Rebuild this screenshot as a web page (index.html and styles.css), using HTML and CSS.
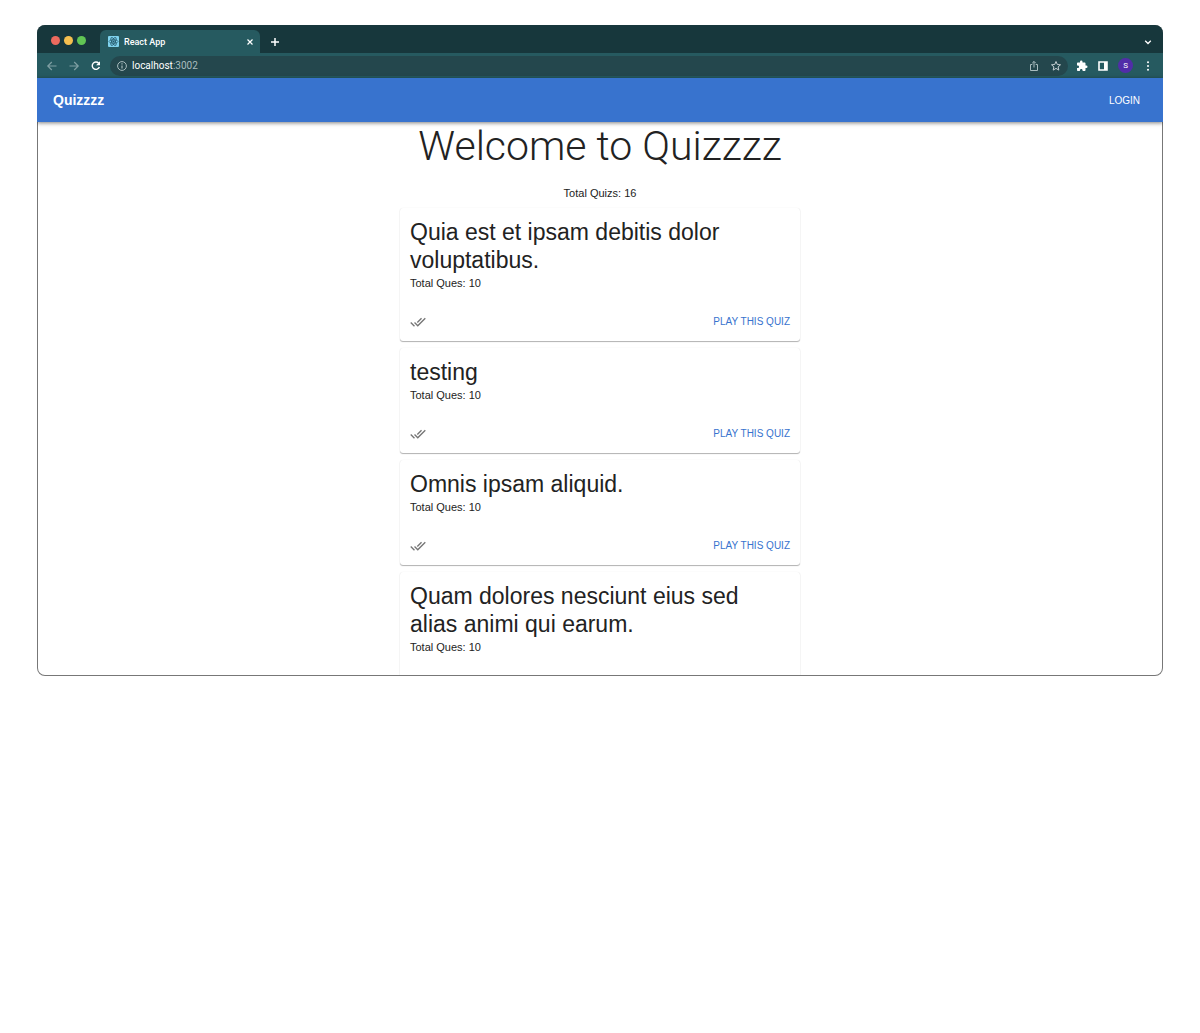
FILE: index.html
```html
<!DOCTYPE html>
<html lang="en">
<head>
<meta charset="utf-8">
<title>React App</title>
<link rel="stylesheet" href="styles.css">
</head>
<body>
<svg class="defs" aria-hidden="true">
  <symbol id="done-all" viewBox="0 0 24 24"><path d="M18 7l-1.410-1.410-6.340 6.340 1.410 1.410L18 7zm4.240-1.410L11.660 16.170 7.480 12l-1.410 1.410L11.660 19l12-12-1.420-1.410zM.41 13.410L6 19l1.410-1.410L1.830 12 .41 13.410z"/></symbol>
</svg>
<div class="window">
  <div class="tabbar">
    <div class="lights"><span class="light red"></span><span class="light yellow"></span><span class="light green"></span></div>
    <div class="tab">
      <svg class="favicon" viewBox="0 0 22 22"><rect width="22" height="22" rx="2" fill="#7fd3ee"/><g fill="none" stroke="#24596b" stroke-width="1.500"><ellipse cx="11" cy="11" rx="9" ry="3.500"/><ellipse cx="11" cy="11" rx="9" ry="3.500" transform="rotate(60 11 11)"/><ellipse cx="11" cy="11" rx="9" ry="3.500" transform="rotate(120 11 11)"/></g><circle cx="11" cy="11" r="2" fill="#24596b"/></svg>
      <span class="tab-title">React App</span>
      <button class="icon-button" aria-label="Close tab"><svg class="close" viewBox="0 0 8 8"><path d="M1.500 1.500l5 5m0-5l-5 5" fill="none" stroke="#fff" stroke-width="1.200"/></svg></button>
    </div>
    <button class="icon-button new-tab" aria-label="New tab"><svg viewBox="0 0 10 10"><path d="M5 1v8M1 5h8" fill="none" stroke="#fff" stroke-width="1.500"/></svg></button>
    <button class="icon-button tab-menu" aria-label="Search tabs"><svg viewBox="0 0 10 10"><path d="M2.200 3.800L5 6.500l2.800-2.700" fill="none" stroke="#fff" stroke-width="1.300"/></svg></button>
  </div>
  <div class="toolbar">
    <div class="nav">
      <button class="icon-button" aria-label="Back"><svg viewBox="0 0 12 12"><path d="M10.500 6H2M5.800 2L1.800 6l4 4" fill="none" stroke="#7f9fa3" stroke-width="1.200"/></svg></button>
      <button class="icon-button" aria-label="Forward"><svg viewBox="0 0 12 12"><path d="M1.500 6H10M6.200 2l4 4-4 4" fill="none" stroke="#7f9fa3" stroke-width="1.200"/></svg></button>
      <button class="icon-button" aria-label="Reload"><svg viewBox="0 0 12 12"><path d="M8.700 3.200A3.700 3.700 0 1 0 9.400 7" fill="none" stroke="#fff" stroke-width="1.400"/><path d="M10 1.300v3.900H6.100z" fill="#fff"/></svg></button>
    </div>
    <div class="address">
      <svg viewBox="0 0 12 12"><circle cx="6" cy="6" r="4.400" fill="none" stroke="#a9bcbe"/><path d="M6 5.400v3M6 3.300v1.200" stroke="#a9bcbe" stroke-width="1.200"/></svg>
      <span class="url">localhost<span class="port">:3002</span></span>
      <button class="icon-button" aria-label="Share"><svg viewBox="0 0 12 12"><path d="M4.300 4.500H2.500v6h7v-6H7.700M6 7.500V1.500M4.200 3.200L6 1.400l1.800 1.800" fill="none" stroke="#a9bcbe"/></svg></button>
      <button class="icon-button" aria-label="Bookmark"><svg viewBox="0 0 12 12"><path d="M6 1.500l1.300 3 3.200.300-2.400 2.100.7 3.200L6 8.400l-2.800 1.700.7-3.200L1.500 4.800l3.200-.3z" fill="none" stroke="#c5d0d2"/></svg></button>
    </div>
    <div class="tools">
      <button class="icon-button" aria-label="Extensions"><svg viewBox="0 0 24 24"><path fill="#fff" d="M20.500 11H19V7c0-1.100-.9-2-2-2h-4V3.500a2.500 2.500 0 0 0-5 0V5H4c-1.100 0-2 .9-2 2v3.800h1.500c1.500 0 2.700 1.200 2.700 2.700s-1.200 2.700-2.700 2.700H2V20c0 1.100.9 2 2 2h3.800v-1.500c0-1.500 1.200-2.700 2.700-2.700s2.700 1.200 2.700 2.700V22H17c1.100 0 2-.9 2-2v-4h1.500a2.500 2.500 0 0 0 0-5z"/></svg></button>
      <button class="icon-button" aria-label="Side panel"><svg viewBox="0 0 12 12"><path d="M2 2h8v8H2z" fill="none" stroke="#fff" stroke-width="1.600"/><path d="M7 2h3v8H7z" fill="#fff"/></svg></button>
      <button class="profile" aria-label="Profile">S</button>
      <button class="icon-button" aria-label="Menu"><svg viewBox="0 0 12 12"><g fill="#fff"><circle cx="6" cy="2.300" r="1"/><circle cx="6" cy="6" r="1"/><circle cx="6" cy="9.700" r="1"/></g></svg></button>
    </div>
  </div>
  <header class="appbar">
    <a class="brand" href="#">Quizzzz</a>
    <a class="login" href="#">LOGIN</a>
  </header>
  <main class="page">
    <h1 class="title">Welcome to Quizzzz</h1>
    <p class="total">Total Quizs: 16</p>
    <div class="quizzes">
      <article class="card">
        <h2 class="name">Quia est et ipsam debitis dolor voluptatibus.</h2>
        <p class="count">Total Ques: 10</p>
        <div class="actions"><svg class="done"><use href="#done-all"/></svg><button class="play">PLAY THIS QUIZ</button></div>
      </article>
      <article class="card">
        <h2 class="name">testing</h2>
        <p class="count">Total Ques: 10</p>
        <div class="actions"><svg class="done"><use href="#done-all"/></svg><button class="play">PLAY THIS QUIZ</button></div>
      </article>
      <article class="card">
        <h2 class="name">Omnis ipsam aliquid.</h2>
        <p class="count">Total Ques: 10</p>
        <div class="actions"><svg class="done"><use href="#done-all"/></svg><button class="play">PLAY THIS QUIZ</button></div>
      </article>
      <article class="card">
        <h2 class="name">Quam dolores nesciunt eius sed alias animi qui earum.</h2>
        <p class="count">Total Ques: 10</p>
        <div class="actions"></div>
      </article>
    </div>
  </main>
</div>
</body>
</html>
```

FILE: styles.css
```css
* { box-sizing: border-box; }

body {
  margin: 0;
  padding: 25px 37px;
  background: #fff;
  color: #222;
  font-family: "Liberation Sans", Arial, sans-serif;
}

h1, h2, p { margin: 0; font-weight: 400; }
a { color: inherit; text-decoration: none; }
button { padding: 0; border: 0; background: none; font: inherit; }
svg { display: block; width: 12px; height: 12px; }
.defs { display: none; }
.icon-button { display: flex; }

.window {
  display: flex;
  flex-direction: column;
  aspect-ratio: 1126 / 651;
  min-height: 0;
  overflow: hidden;
  border-radius: 8px;
  background: #fff;
  box-shadow: inset 0 0 0 1px #777;
}

/* Browser frame */
.tabbar {
  display: flex;
  flex: none;
  align-items: center;
  height: 28px;
  padding: 0 10px 0 14px;
  background: #17373c;
}
.lights { display: flex; gap: 4px; padding-top: 2px; }
.light { width: 9px; height: 9px; border-radius: 50%; }
.red { background: #ed6a5e; }
.yellow { background: #f5bf4f; }
.green { background: #61c554; }
.tab {
  display: flex;
  align-items: center;
  align-self: flex-end;
  gap: 5px;
  width: 160px;
  height: 23px;
  margin-left: 14px;
  padding: 0 6px 0 8px;
  border-radius: 6px 6px 0 0;
  background: #265a60;
  color: #fff;
  font: 500 9px/12px Roboto, sans-serif;
}
.tab-title { flex: 1; }
.favicon { width: 11px; height: 11px; }
.close { width: 8px; height: 8px; }
.new-tab { margin: 5px 0 0 10px; }
.new-tab svg, .tab-menu svg { width: 10px; height: 10px; }
.tab-menu { margin: 5px 0 0 auto; }

.toolbar {
  display: flex;
  flex: none;
  align-items: center;
  gap: 8px;
  height: 25px;
  padding: 0 9px;
  background: #265a60;
}
.nav { display: flex; gap: 10px; }
.address {
  display: flex;
  flex: 1;
  align-items: center;
  gap: 10px;
  height: 20px;
  padding: 0 6px;
  border-radius: 10px;
  background: #24474d;
}
.url {
  flex: 1;
  margin-left: -6px;
  color: #fff;
  font: 10px/12px Roboto, sans-serif;
}
.port { color: #a9bcbe; }
.tools { display: flex; align-items: center; gap: 9px; }
.profile {
  width: 15px;
  height: 15px;
  border-radius: 50%;
  background: #512da8;
  color: #fff;
  font: 8px/15px Roboto, sans-serif;
}

/* Application */
.appbar {
  display: flex;
  flex: none;
  align-items: center;
  justify-content: space-between;
  height: 44px;
  padding: 0 23px 0 16px;
  background: #3873ce;
  box-shadow: 0 1px 4px rgba(0, 0, 0, .5);
  color: #fff;
}
.brand { font: 700 14px/20px "Liberation Sans", sans-serif; }
.login { font-size: 10px; }
.page {
  flex: 1;
  min-height: 0;
  overflow: hidden;
  margin: 0 1px 1px;
}
.title {
  font: 300 41px/48px Roboto, sans-serif;
  text-align: center;
}
.total { margin: 14px 0 6px; text-align: center; }
.total, .count { font-size: 11px; line-height: 18px; }
.quizzes {
  display: grid;
  gap: 7px;
  max-width: 400px;
  margin: 0 auto;
}
.card {
  padding: 10px 10px 0;
  border-radius: 3px;
  box-shadow: 0 1px 1px rgba(0, 0, 0, .3), 0 0 1px rgba(0, 0, 0, .12);
}
.name { font-size: 23px; line-height: 28px; }
.actions {
  display: flex;
  align-items: center;
  justify-content: space-between;
  height: 39px;
  margin-top: 10px;
}
.done { width: 16px; height: 16px; fill: #757575; }
.play { color: #3873ce; font-size: 10px; }
```
